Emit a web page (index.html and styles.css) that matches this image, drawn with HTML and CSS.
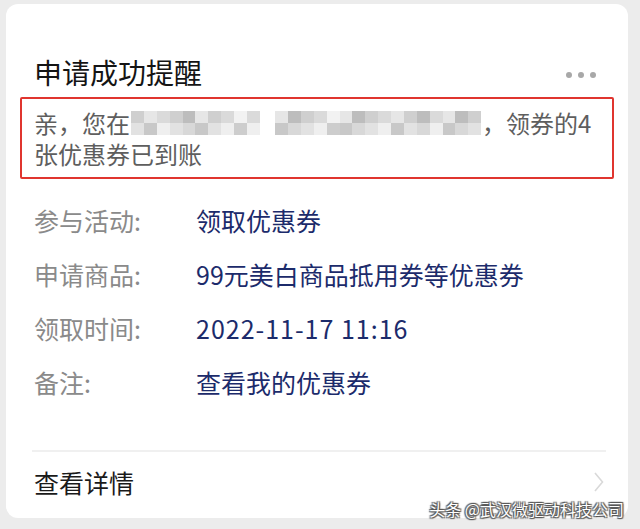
FILE: index.html
```html
<!DOCTYPE html>
<html lang="zh">
<head>
<meta charset="utf-8">
<link rel="stylesheet" href="styles.css">
</head>
<body>
<div class="card">
  <div class="head">
    <div class="title">申请成功提醒</div>
    <div class="dots"><span></span><span></span><span></span></div>
  </div>
  <div class="notice">
    <div class="line">亲，您在<span class="blur"><span class="b b1"></span><span class="b b2"></span><span class="b b3"></span><span class="b b1"></span><span class="b b4"></span><span class="b b2"></span><span class="b b1"></span><span class="b b3"></span><span class="b b5"></span><span class="b b3"></span><span class="gap"></span><span class="b b2"></span><span class="b b4"></span><span class="b b1"></span><span class="b b3"></span><span class="b b5"></span><span class="b b2"></span><span class="b b4"></span><span class="b b1"></span><span class="b b3"></span><span class="b b2"></span><span class="b b1"></span><span class="b b4"></span><span class="b b3"></span><span class="b b2"></span><span class="b b4"></span><span class="b b1"></span></span>，领券的4</div>
    <div class="line">张优惠券已到账</div>
  </div>
  <div class="rows">
    <div class="row"><span class="label">参与活动:</span><span class="value">领取优惠券</span></div>
    <div class="row"><span class="label">申请商品:</span><span class="value">99元美白商品抵用券等优惠券</span></div>
    <div class="row"><span class="label">领取时间:</span><span class="value date">2022-11-17 11:16</span></div>
    <div class="row"><span class="label">备注:</span><span class="value">查看我的优惠券</span></div>
  </div>
  <div class="footer">
    <span class="more">查看详情</span>
    <svg class="chev" width="10" height="20" viewBox="0 0 10 20"><path d="M1 1 L8.5 10 L1 19" fill="none" stroke="#d9d9d9" stroke-width="1.6"/></svg>
  </div>
  <div class="mark">头条 @武汉微驱动科技公司</div>
</div>
</body>
</html>
```

FILE: styles.css
```css
html, body {
  margin: 0;
  padding: 0;
  background: #ececec;
}
body {
  font-family: "Noto Sans CJK SC", "Noto Sans", sans-serif;
  width: 640px;
  height: 529px;
  overflow: hidden;
}
.card {
  position: relative;
  margin: 4px 12px 0 6px;
  width: 622px;
  height: 514px;
  background: #fff;
  border-radius: 12px;
  box-sizing: border-box;
  padding: 0 14px;
}
.head {
  display: flex;
  align-items: center;
  justify-content: space-between;
  padding-top: 46px;
  height: 44px;
  margin-bottom: 3px;
  box-sizing: content-box;
  padding-left: 14px;
  padding-right: 18px;
}
.title {
  font-size: 28px;
  line-height: 44px;
  color: #141414;
}
.dots {
  display: flex;
  gap: 6px;
  margin-top: 6px;
}
.dots span {
  width: 6px;
  height: 6px;
  border-radius: 50%;
  background: #a8a8a8;
}
.notice {
  border: 2px solid #e0352f;
  border-radius: 2px;
  padding: 8px 12px 8px 12px;
  color: #5e5e5e;
  font-size: 24px;
  line-height: 31px;
}
.line {
  white-space: nowrap;
  display: flex;
  align-items: center;
  height: 31px;
}
.blur {
  display: inline-flex;
  height: 24px;
  width: 350px;
  margin: 0 1px 0 1px;
}
.b {
  flex: 1;
  height: 24px;
  background: linear-gradient(#d7d7d7 0 50%, #e4e4e4 50% 100%);
}
.b1 { background: linear-gradient(#cfcfcf 0 50%, #e2e2e2 50% 100%); }
.b2 { background: linear-gradient(#e6e6e6 0 50%, #c8c8c8 50% 100%); }
.b3 { background: linear-gradient(#dadada 0 50%, #efefef 50% 100%); }
.b4 { background: linear-gradient(#bdbdbd 0 50%, #d8d8d8 50% 100%); }
.b5 { background: linear-gradient(#f2f2f2 0 50%, #cdcdcd 50% 100%); }
.gap {
  flex: 1.2;
}
.rows {
  padding: 14px 0 0 14px;
}
.row {
  display: flex;
  align-items: center;
  height: 54px;
  font-size: 25px;
}
.label {
  width: 162px;
  color: #8a8a8a;
}
.value {
  color: #1c2b6b;
}
.date {
  letter-spacing: 1px;
}
.footer {
  position: absolute;
  left: 26px;
  right: 22px;
  top: 446px;
  height: 60px;
  border-top: 2px solid #f0f0f0;
  display: flex;
  align-items: center;
  justify-content: space-between;
  padding-left: 2px;
  padding-right: 2px;
}
.more {
  font-size: 25px;
  color: #1a1a1a;
}
.mark {
  position: absolute;
  right: 4px;
  bottom: -2px;
  font-size: 16px;
  line-height: 22px;
  color: #fff;
  text-shadow: 0 0 1px #555, 1px 1px 1px #555, -1px -1px 1px #555, 1px -1px 1px #555, -1px 1px 1px #555;
}
```
